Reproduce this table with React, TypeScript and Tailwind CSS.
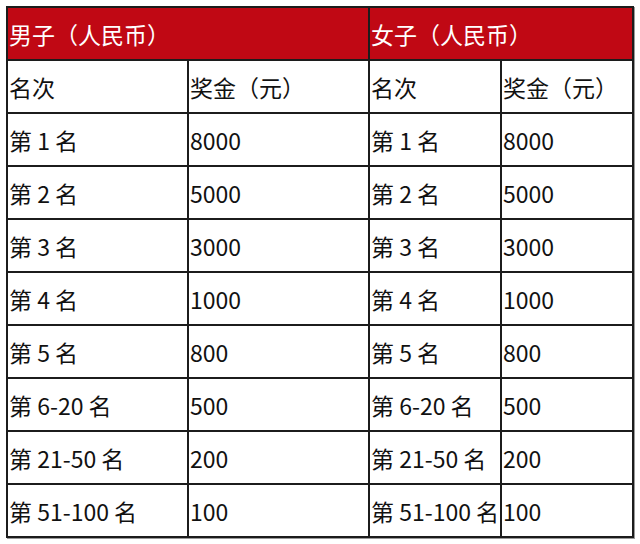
const ranks = [
  ["第 1 名", "8000"],
  ["第 2 名", "5000"],
  ["第 3 名", "3000"],
  ["第 4 名", "1000"],
  ["第 5 名", "800"],
  ["第 6-20 名", "500"],
  ["第 21-50 名", "200"],
  ["第 51-100 名", "100"],
]

const cell = "border-2 border-[#1c1c1c] h-[53px] pl-[1px] pr-0 pt-[2px] pb-0 text-left align-middle whitespace-nowrap overflow-hidden"

export default function App() {
  return (
    <div
      className="bg-white w-[640px] h-[544px] pt-[6px] pl-[6px]"
      style={{ fontFamily: '"Noto Sans CJK SC", "Noto Sans", sans-serif' }}
    >
      <table className="border-collapse table-fixed w-[626px] text-[23px] text-[#111] leading-none shadow-[1px_1px_0_#9a9a9a]">
        <colgroup>
          <col className="w-[181px]" />
          <col className="w-[181px]" />
          <col className="w-[132px]" />
          <col className="w-[132px]" />
        </colgroup>
        <thead>
          <tr>
            <th colSpan={2} className={`${cell} bg-[#c00814] text-white font-normal`}>
              男子（人民币）
            </th>
            <th colSpan={2} className={`${cell} bg-[#c00814] text-white font-normal`}>
              女子（人民币）
            </th>
          </tr>
        </thead>
        <tbody>
          <tr>
            <td className={cell}>名次</td>
            <td className={cell}>奖金（元）</td>
            <td className={cell}>名次</td>
            <td className={cell}>奖金（元）</td>
          </tr>
          {ranks.map(([name, prize]) => (
            <tr key={name}>
              <td className={cell}>{name}</td>
              <td className={cell}>{prize}</td>
              <td className={cell}>{name}</td>
              <td className={cell}>{prize}</td>
            </tr>
          ))}
        </tbody>
      </table>
    </div>
  )
}
